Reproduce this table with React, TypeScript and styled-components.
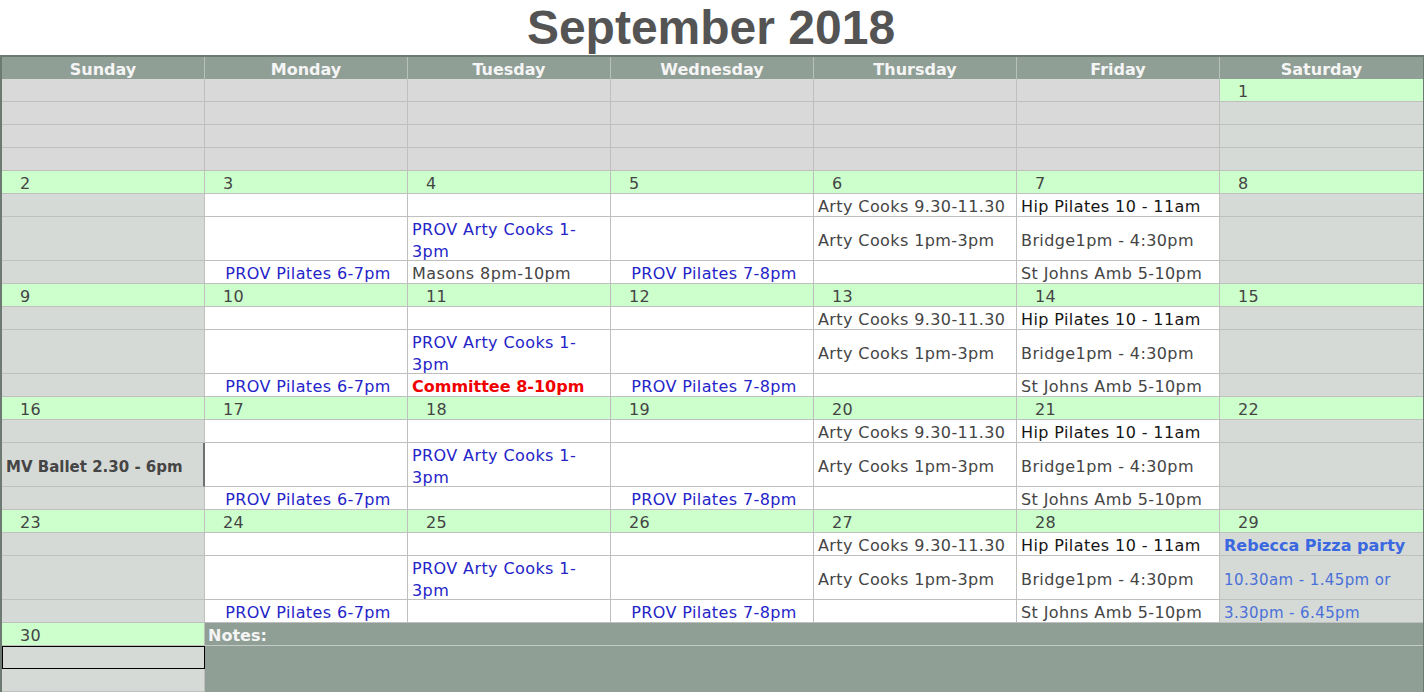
import React from 'react';
import styled, { createGlobalStyle, css } from 'styled-components';

const GlobalStyle = createGlobalStyle`
  body {
    margin: 0;
    background: #fff;
    font-family: "DejaVu Sans", "Liberation Sans", sans-serif;
  }
`

type Tone = 'blank' | 'date' | 'off' | 'open'
type Ink = 'prov' | 'grey' | 'black' | 'red' | 'party' | 'partyLight'

const inks: Record<Ink, string> = {
  prov: '#2424c8',
  grey: '#454545',
  black: '#151515',
  red: '#f00000',
  party: '#3b68e0',
  partyLight: '#4a70d8'
}

const tones: Record<Tone, string> = {
  blank: '#d9d9d9',
  date: '#ccffcc',
  off: '#d5dad7',
  open: '#ffffff'
}

const Page = styled.div`
  width: 1424px;
`

const Title = styled.h1`
  margin: 0;
  height: 55px;
  line-height: 55px;
  text-align: center;
  font-family: "Liberation Sans", Arial, sans-serif;
  font-size: 48px;
  font-weight: bold;
  color: #545454;
  padding-right: 2px;
`

const Calendar = styled.div`
  display: grid;
  grid-template-columns: repeat(7, 203px);
  width: 1421px;
  border: 2px solid #6d7a72;
  border-bottom: 0;
  position: relative;
  z-index: 1;
`

const HeadCell = styled.div`
  box-sizing: border-box;
  height: 22px;
  padding-top: 3px;
  background: #909f96;
  border-right: 1px solid #b7c0ba;
  color: #f5f5f5;
  font-weight: bold;
  font-size: 16px;
  line-height: 20px;
  text-align: center;

  &:nth-child(7) {
    border-right: 0;
  }
`

interface CellProps {
  $tone: Tone
  $tall?: boolean
  $center?: boolean
  $ink?: Ink
  $bold?: boolean
  $size?: number
  $last?: boolean
  $edge?: boolean
  $picked?: boolean
}

const Cell = styled.div<CellProps>`
  box-sizing: border-box;
  height: ${p => (p.$tall ? 44 : 23)}px;
  background: ${p => tones[p.$tone]};
  border-right: 1px solid #bfbfbf;
  border-bottom: 1px solid #bfbfbf;
  display: flex;
  align-items: center;
  justify-content: ${p => (p.$center ? 'center' : 'flex-start')};
  padding: ${p => (p.$tone === 'date' ? '4px 0 0 18px' : '4px 0 0 4px')};
  color: ${p => (p.$ink ? inks[p.$ink] : '#444')};
  font-size: ${p => p.$size || 16}px;
  font-weight: ${p => (p.$bold ? 'bold' : 'normal')};
  letter-spacing: ${p => (p.$bold ? 0 : 0.4)}px;
  line-height: 22px;
  white-space: nowrap;
  overflow: visible;

  ${p => p.$last && css`border-right: 0;`}
  ${p => p.$edge && css`border-right: 2px solid #6f6f6f;`}
  ${p => p.$picked && css`outline: 1px solid #000; outline-offset: -1px;`}
`

const Notes = styled.div`
  grid-column: 2 / span 6;
  grid-row: span 3;
  background: #909f96;
  display: flex;
  flex-direction: column;
`

const NotesLabel = styled.div`
  box-sizing: border-box;
  height: 23px;
  border-bottom: 1px solid #c2cbc5;
  padding: 3px 0 0 3px;
  color: #f5f5f5;
  font-weight: bold;
  font-size: 16px;
  line-height: 20px;
`

interface Ev {
  text: string[]
  ink?: Ink
  bold?: boolean
  center?: boolean
  size?: number
}

interface Day {
  date?: number
  off?: boolean
  events: (Ev | null)[]
  edgeTall?: boolean
}

const dayNames = ['Sunday', 'Monday', 'Tuesday', 'Wednesday', 'Thursday', 'Friday', 'Saturday']

const provPilates = (t: string): Ev => ({ text: [t], ink: 'prov', center: true })
const provCooks: Ev = { text: ['PROV Arty Cooks 1-', '3pm'], ink: 'prov' }

const thursday: (Ev | null)[] = [
  { text: ['Arty Cooks 9.30-11.30'], ink: 'grey' },
  { text: ['Arty Cooks 1pm-3pm'], ink: 'grey' },
  null
]
const friday: (Ev | null)[] = [
  { text: ['Hip Pilates 10 - 11am'], ink: 'black' },
  { text: ['Bridge1pm - 4:30pm'], ink: 'grey' },
  { text: ['St Johns Amb 5-10pm'], ink: 'grey' }
]

const makeWeek = (start: number, tuesdayLast: Ev | null, sunday?: Day, saturday?: Day): Day[] => [
  sunday || { date: start, off: true, events: [null, null, null] },
  { date: start + 1, events: [null, null, provPilates('PROV Pilates 6-7pm')] },
  { date: start + 2, events: [null, provCooks, tuesdayLast] },
  { date: start + 3, events: [null, null, provPilates('PROV Pilates 7-8pm')] },
  { date: start + 4, events: thursday },
  { date: start + 5, events: friday },
  saturday || { date: start + 6, off: true, events: [null, null, null] }
]

const weeks: Day[][] = [
  makeWeek(2, { text: ['Masons 8pm-10pm'], ink: 'grey' }),
  makeWeek(9, { text: ['Committee 8-10pm'], ink: 'red', bold: true }),
  makeWeek(16, null, {
    date: 16,
    off: true,
    edgeTall: true,
    events: [null, { text: ['MV Ballet 2.30 - 6pm'], ink: 'grey', bold: true, size: 15 }, null]
  }),
  makeWeek(23, null, undefined, {
    date: 29,
    off: true,
    events: [
      { text: ['Rebecca Pizza party'], ink: 'party', bold: true },
      { text: ['10.30am - 1.45pm or'], ink: 'partyLight', size: 15 },
      { text: ['3.30pm - 6.45pm'], ink: 'partyLight', size: 15 }
    ]
  })
]

const EventText = ({ ev }: { ev: Ev }) => (
  <span>
    {ev.text.map((line, i) => (
      <React.Fragment key={i}>
        {i > 0 && <br />}
        {line}
      </React.Fragment>
    ))}
  </span>
)

const FirstWeek = () => (
  <>
    {[0, 1, 2, 3].map(row =>
      dayNames.map((_, col) => {
        const isOne = row === 0 && col === 6
        return (
          <Cell
            key={`w1-${row}-${col}`}
            $tone={isOne ? 'date' : col === 6 ? 'off' : 'blank'}
            $last={col === 6}
          >
            {isOne ? '1' : null}
          </Cell>
        )
      })
    )}
  </>
)

const WeekRows = ({ days, idx }: { days: Day[]; idx: number }) => (
  <>
    {days.map((d, col) => (
      <Cell key={`d${idx}-${col}`} $tone="date" $last={col === 6}>
        {d.date}
      </Cell>
    ))}
    {[0, 1, 2].map(row =>
      days.map((d, col) => {
        const ev = d.events[row]
        return (
          <Cell
            key={`e${idx}-${row}-${col}`}
            $tone={d.off ? 'off' : 'open'}
            $tall={row === 1}
            $last={col === 6}
            $edge={d.edgeTall && row === 1}
            $center={ev?.center}
            $ink={ev?.ink}
            $bold={ev?.bold}
            $size={ev?.size}
          >
            {ev ? <EventText ev={ev} /> : null}
          </Cell>
        )
      })
    )}
  </>
)

export default function App() {
  return (
    <Page>
      <GlobalStyle />
      <Title>September 2018</Title>
      <Calendar>
        {dayNames.map(n => (
          <HeadCell key={n}>{n}</HeadCell>
        ))}
        <FirstWeek />
        {weeks.map((w, i) => (
          <WeekRows key={i} days={w} idx={i} />
        ))}
        <Cell $tone="date">30</Cell>
        <Notes>
          <NotesLabel>Notes:</NotesLabel>
        </Notes>
        <Cell $tone="off" $picked />
        <Cell $tone="off" />
      </Calendar>
    </Page>
  );
}
